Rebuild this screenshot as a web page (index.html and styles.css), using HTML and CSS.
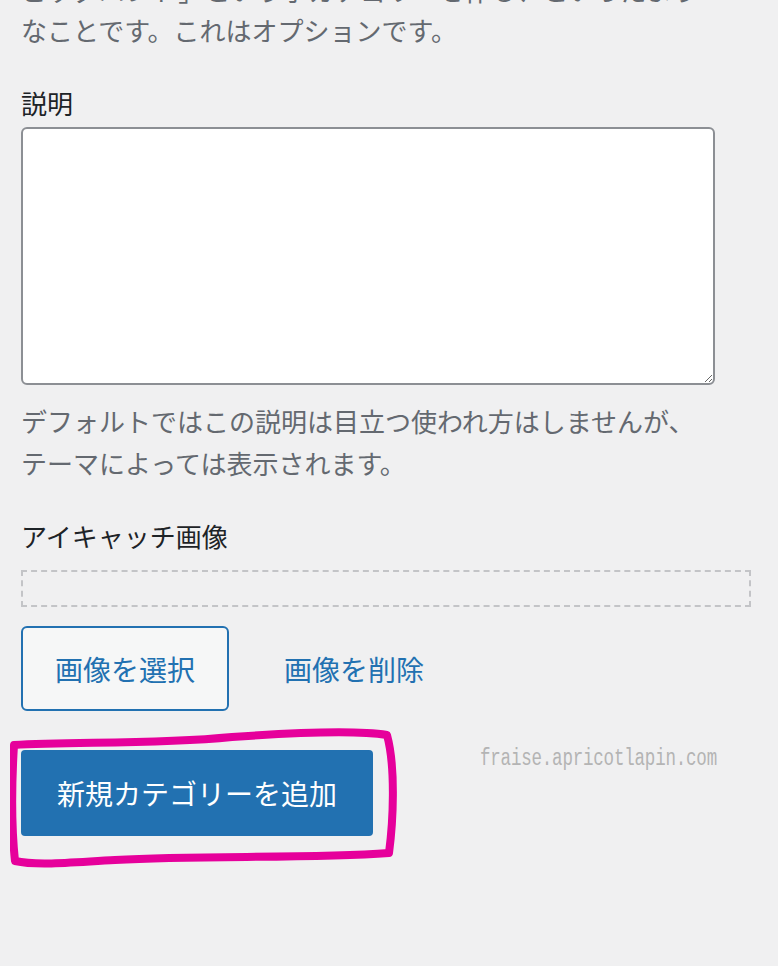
FILE: index.html
```html
<!DOCTYPE html>
<html lang="ja">
<head>
    <meta charset="UTF-8">
    <meta name="viewport" content="width=device-width, initial-scale=1.0">
    <title>新規カテゴリーを追加</title>
    <link rel="stylesheet" href="styles.css">
</head>
<body>
    <div class="form-wrap">
        <p class="help help-top">ビッグバンド」という子カテゴリーを作る、といったよう<br>なことです。これはオプションです。</p>

        <div class="form-field first">
            <label class="field-label" for="tag-description">説明</label>
            <textarea id="tag-description" class="field-textarea"></textarea>
            <p class="help">デフォルトではこの説明は目立つ使われ方はしませんが、<br>テーマによっては表示されます。</p>
        </div>

        <div class="form-field">
            <label class="field-label">アイキャッチ画像</label>
            <div class="thumb-box"></div>
            <div class="thumb-actions">
                <button class="button">画像を選択</button>
                <a href="#" class="remove-link">画像を削除</a>
            </div>
        </div>

        <div class="submit-row">
            <div class="submit-wrap">
                <button class="button-primary">新規カテゴリーを追加</button>
                <!-- hand drawn marker around the submit button -->
                <svg class="marker" width="400" height="150" viewBox="0 0 400 150">
                    <path d="M4,22 C60,18 140,22 222,14 C292,9 352,8 377,12 C386,45 383,100 379,130 C295,136 195,132 105,137 C65,139 28,143 5,138 C1,100 2,55 4,22 Z"
                          fill="none" stroke="#e6009b" stroke-width="8" stroke-linejoin="round" stroke-linecap="round"/>
                </svg>
            </div>
            <span class="watermark">fraise.apricotlapin.com</span>
        </div>
    </div>
</body>
</html>
```

FILE: styles.css
```css
html, body {
    height: 100%;
}
body {
    margin: 0;
    background: #f0f0f1;
    font-family: "Noto Sans CJK JP", "Noto Sans", sans-serif;
    color: #1d2327;
}
.form-wrap {
    padding: 0 21px;
    overflow: hidden;
}
.help {
    margin: 0;
    font-size: 26px;
    line-height: 42px;
    color: #646970;
    white-space: nowrap;
}
.help-top {
    margin-top: -30px;
    line-height: 40px;
}
.form-field {
    margin-top: 32px;
}
.form-field.first {
    margin-top: 33px;
}
.field-label {
    display: block;
    font-size: 26px;
    line-height: 40px;
    color: #1d2327;
}
.field-textarea {
    display: block;
    box-sizing: border-box;
    width: 694px;
    height: 258px;
    margin: 4px 0 15px;
    border: 2px solid #8c8f94;
    border-radius: 6px;
    background: #fff;
}
.thumb-box {
    box-sizing: border-box;
    width: 730px;
    height: 37px;
    margin-top: 14px;
    border: 2px dashed #c3c4c7;
}
.thumb-actions {
    display: flex;
    align-items: center;
    gap: 55px;
    margin-top: 19px;
}
.button {
    box-sizing: border-box;
    width: 208px;
    height: 85px;
    border: 2px solid #2271b1;
    border-radius: 6px;
    background: #f6f7f7;
    color: #2271b1;
    font-family: inherit;
    font-size: 28px;
}
.remove-link {
    color: #2271b1;
    font-size: 28px;
    text-decoration: none;
}
.submit-row {
    display: flex;
    align-items: flex-start;
    margin-top: 39px;
    padding-bottom: 40px;
}
.submit-wrap {
    position: relative;
}
.button-primary {
    display: block;
    width: 352px;
    height: 86px;
    border: 0;
    border-radius: 4px;
    background: #2271b1;
    color: #fff;
    font-family: inherit;
    font-size: 28px;
}
.marker {
    position: absolute;
    left: -11px;
    top: -27px;
}
.watermark {
    display: inline-block;
    margin: -7px 0 0 107px;
    font-family: "Liberation Mono", monospace;
    font-size: 17.5px;
    line-height: 30px;
    color: #b4b4b4;
    letter-spacing: -0.2px;
    transform: scaleY(1.35);
}
```
